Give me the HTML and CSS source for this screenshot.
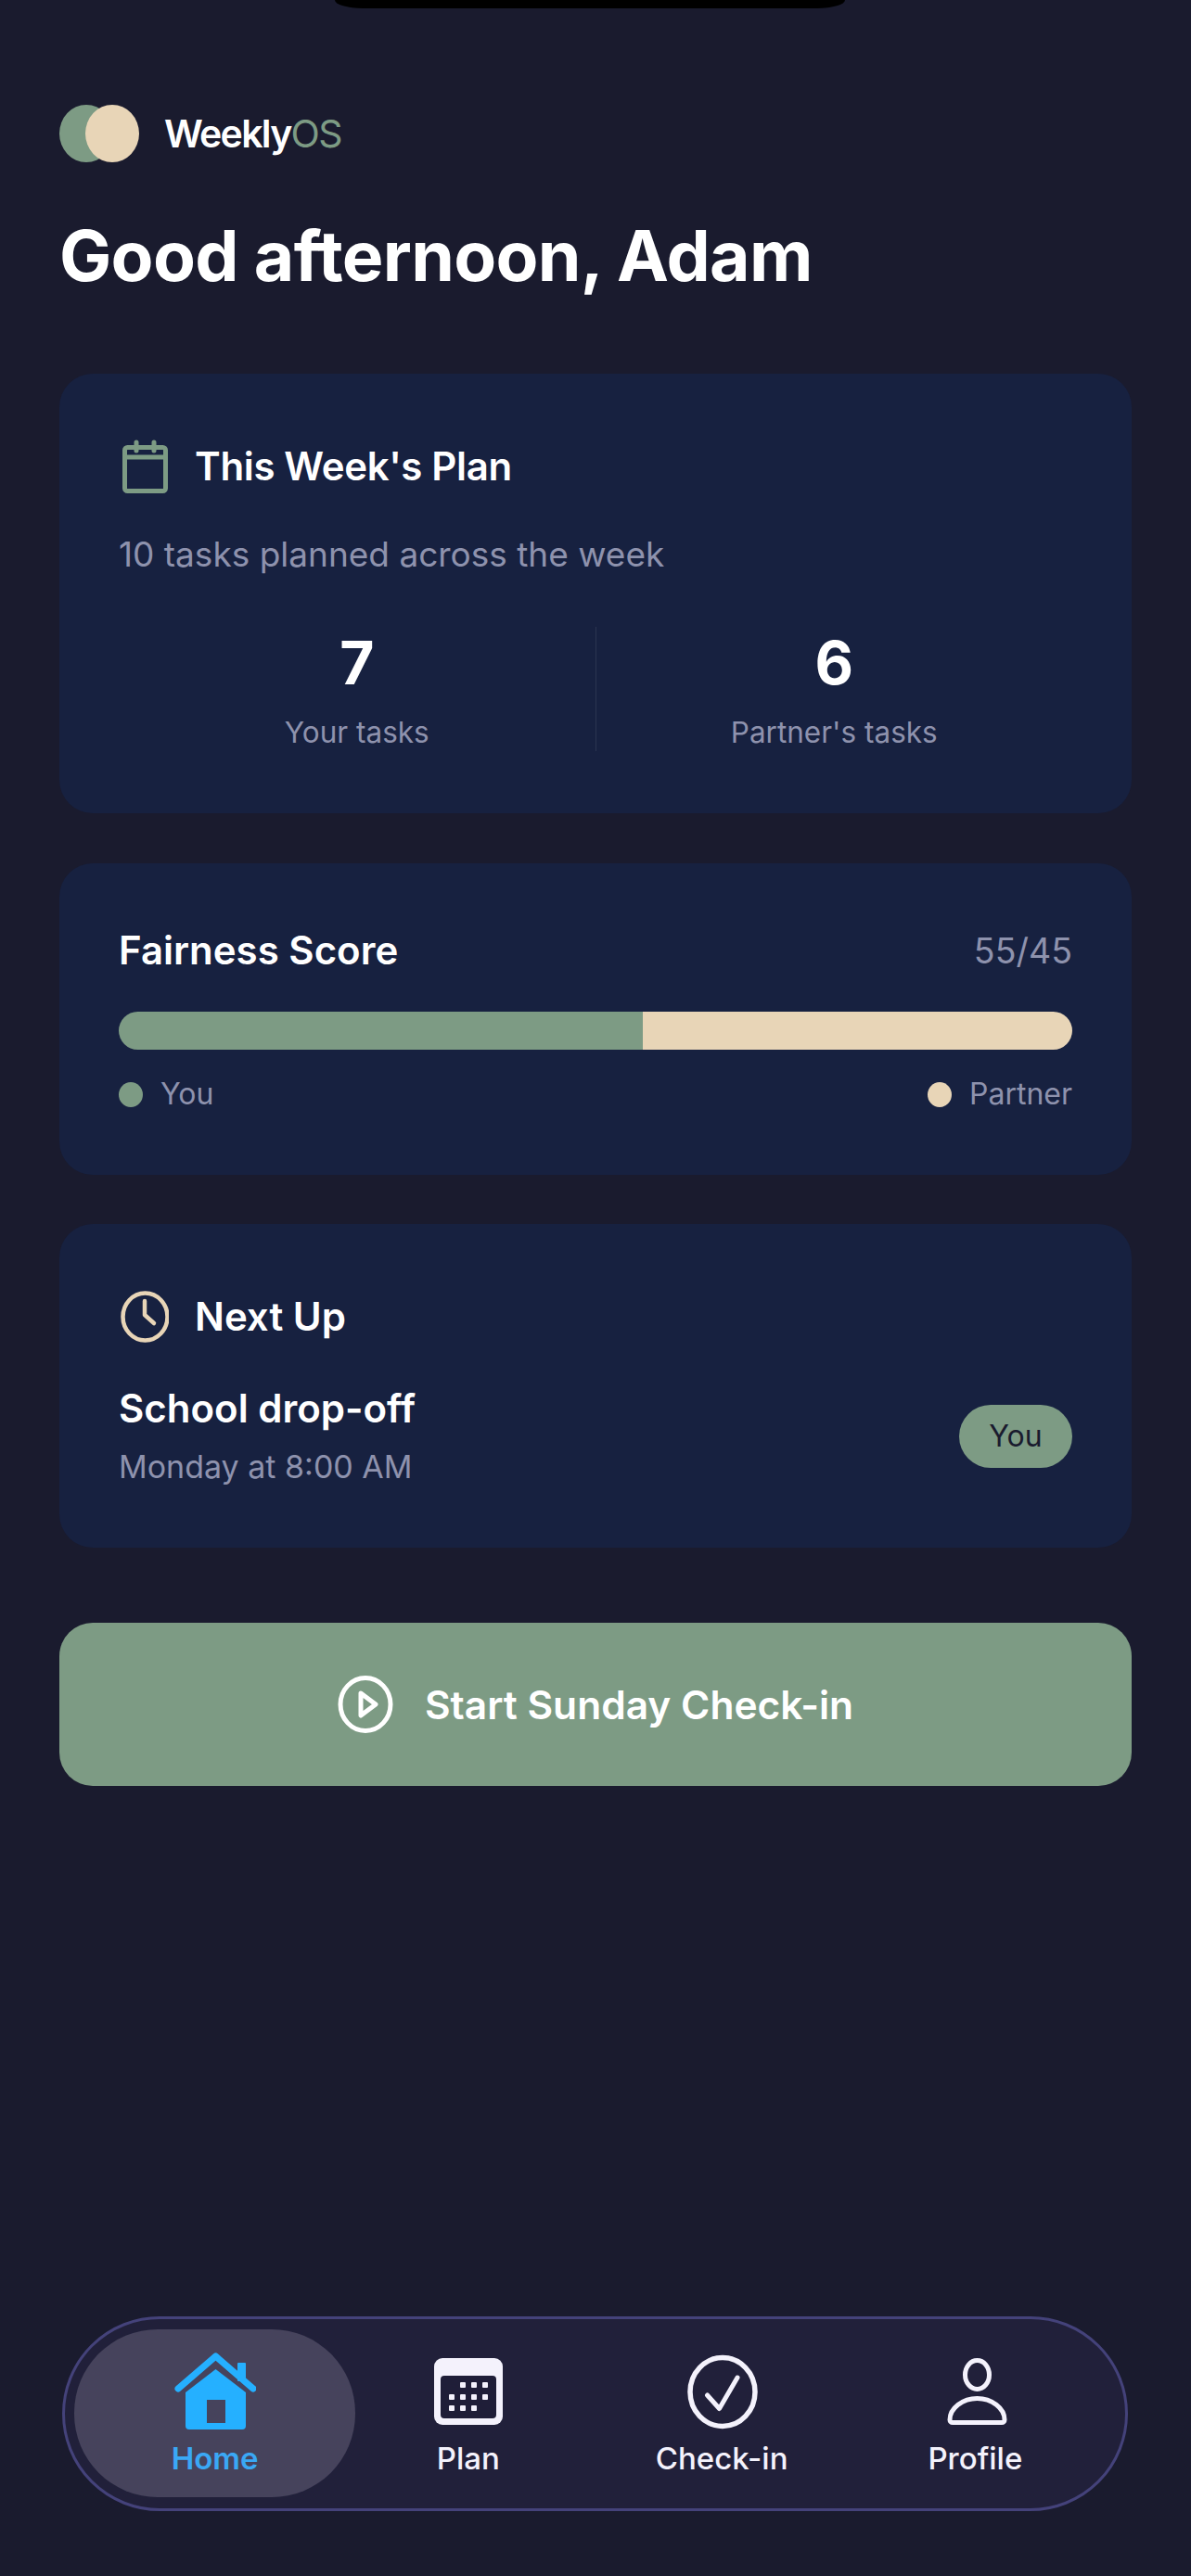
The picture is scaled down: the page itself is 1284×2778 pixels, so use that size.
FILE: index.html
```html
<!DOCTYPE html>
<html lang="en">
<head>
<meta charset="utf-8">
<title>WeeklyOS</title>
<link rel="stylesheet" href="styles.css">
</head>
<body>
<div class="notch"></div>
<main class="content">
  <header class="brand">
    <div class="logo"><span class="logo-a"></span><span class="logo-b"></span></div>
    <div class="wordmark">Weekly<span class="wordmark-os">OS</span></div>
  </header>
  <h1 class="greeting">Good afternoon, Adam</h1>

  <section class="card card-plan">
    <div class="card-head">
      <svg class="head-icon" viewBox="0 0 54 58" fill="none" stroke="#7d9b84" stroke-width="5" stroke-linecap="round" stroke-linejoin="round"><rect x="6.500" y="8.500" width="44" height="47" rx="3"/><path d="M6.500 19h44M19 3v9M38 3v9"/></svg>
      <h2 class="card-title card-title-tight">This Week's Plan</h2>
    </div>
    <p class="plan-sub">10 tasks planned across the week</p>
    <div class="stats">
      <div class="stat"><div class="stat-num">7</div><div class="stat-label">Your tasks</div></div>
      <div class="stat-divider"></div>
      <div class="stat"><div class="stat-num">6</div><div class="stat-label">Partner's tasks</div></div>
    </div>
  </section>

  <section class="card card-fair">
    <div class="fair-head">
      <h2 class="card-title">Fairness Score</h2>
      <span class="fair-value">55/45</span>
    </div>
    <div class="bar"><div class="bar-you"></div><div class="bar-partner"></div></div>
    <div class="legend">
      <div class="legend-item"><span class="dot dot-you"></span>You</div>
      <div class="legend-item"><span class="dot dot-partner"></span>Partner</div>
    </div>
  </section>

  <section class="card card-next">
    <div class="card-head">
      <svg class="head-icon" viewBox="0 0 54 58" fill="none" stroke="#e8d5b7" stroke-width="4.500" stroke-linecap="round" stroke-linejoin="round"><ellipse cx="28.500" cy="29" rx="24" ry="25.500"/><path d="M28 12v15l10 9"/></svg>
      <h2 class="card-title">Next Up</h2>
    </div>
    <div class="next-row">
      <div>
        <div class="next-name">School drop-off</div>
        <div class="next-time">Monday at 8:00 AM</div>
      </div>
      <span class="badge">You</span>
    </div>
  </section>

  <button class="cta">
    <svg class="cta-icon" viewBox="0 0 60 62" fill="none" stroke="#fff" stroke-width="5" stroke-linecap="round" stroke-linejoin="round"><ellipse cx="30" cy="31" rx="27" ry="28.500"/><path d="M25 19 41 31 25 43Z"/></svg>
    <span>Start Sunday Check-in</span>
  </button>
</main>

<nav class="tabbar">
  <a class="tab tab-active">
    <svg class="tab-icon" viewBox="0 0 88 88" fill="#25b0ff"><path d="M12 43 44.500 18 77 43V79a4 4 0 0 1-4 4H16a4 4 0 0 1-4-4Z"/><rect x="68" y="11" width="9" height="20" rx="1"/><path d="M4 39 44.500 4 85 39" fill="none" stroke="#25b0ff" stroke-width="7" stroke-linecap="round" stroke-linejoin="round"/><rect x="35" y="51" width="20" height="25" fill="#46435c"/></svg>
    <span class="tab-label">Home</span>
  </a>
  <a class="tab">
    <svg class="tab-icon" viewBox="0 0 88 88"><rect x="7" y="6" width="74" height="72" rx="9" fill="#f4f2fc"/><rect x="14" y="25" width="60" height="46" rx="4" fill="#1f1e38"/><g fill="#f4f2fc"><rect x="35" y="32" width="6" height="6" rx="1"/><rect x="47" y="32" width="6" height="6" rx="1"/><rect x="59" y="32" width="6" height="6" rx="1"/><rect x="23" y="45" width="6" height="6" rx="1"/><rect x="35" y="45" width="6" height="6" rx="1"/><rect x="47" y="45" width="6" height="6" rx="1"/><rect x="59" y="45" width="6" height="6" rx="1"/><rect x="23" y="57" width="6" height="6" rx="1"/><rect x="35" y="57" width="6" height="6" rx="1"/><rect x="47" y="57" width="6" height="6" rx="1"/></g></svg>
    <span class="tab-label">Plan</span>
  </a>
  <a class="tab">
    <svg class="tab-icon" viewBox="0 0 88 88" fill="none" stroke="#f4f2fc" stroke-linecap="round" stroke-linejoin="round"><ellipse cx="45" cy="42.500" rx="35" ry="37" stroke-width="5.500"/><path d="M28.500 46 41.500 60.500 61 27" stroke-width="5"/></svg>
    <span class="tab-label">Check-in</span>
  </a>
  <a class="tab">
    <svg class="tab-icon" viewBox="0 0 88 88" fill="none" stroke="#f4f2fc" stroke-width="5" stroke-linecap="round" stroke-linejoin="round"><ellipse cx="46.500" cy="24" rx="13" ry="15.500"/><path d="M20 75.500H73a3 3 0 0 0 3-3C76 60 62 49.500 46.500 49.500S17 60 17 72.500a3 3 0 0 0 3 3Z"/></svg>
    <span class="tab-label">Profile</span>
  </a>
</nav>
</body>
</html>
```

FILE: styles.css
```css
* { box-sizing: border-box; }
html, body { margin: 0; padding: 0; }
body {
  width: 1284px;
  height: 2778px;
  background: #1a1b2e;
  font-family: Inter, "Noto Sans", sans-serif;
  color: #fff;
  display: flex;
  flex-direction: column;
  overflow: hidden;
}
.notch {
  flex: none;
  width: 550px;
  height: 9px;
  margin: 0 0 0 361px;
  background: #000;
  border-radius: 0 0 30px 30px / 0 0 9px 9px;
}
.content {
  flex: 1;
  display: flex;
  flex-direction: column;
  padding: 104px 64px 0;
}
.brand { display: flex; align-items: center; gap: 27px; height: 62px; }
.logo { display: flex; width: 86px; height: 62px; }
.logo-a, .logo-b { width: 58px; height: 62px; border-radius: 50%; flex: none; }
.logo-a { background: #7d9b84; }
.logo-b { background: #e8d5b7; margin-left: -30px; }
.wordmark { font-size: 41px; font-weight: 600; letter-spacing: -1.700px; }
.wordmark-os { color: #7d9b84; font-weight: 400; }
.greeting {
  margin: 57px 0 0;
  font-size: 75px;
  line-height: 88px;
  font-weight: 700;
  letter-spacing: -0.700px;
}
.card {
  background: #172140;
  border-radius: 36px;
  padding: 0 64px;
}
.card-plan { height: 474px; margin-top: 83px; padding-top: 72px; }
.card-fair { height: 336px; margin-top: 54px; padding-top: 66px; }
.card-next { height: 349px; margin-top: 53px; padding-top: 72px; }
.card-head { display: flex; align-items: center; gap: 28px; height: 56px; }
.head-icon { width: 54px; height: 58px; flex: none; }
.card-title { margin: 0; font-size: 42px; line-height: 56px; font-weight: 600; }
.card-title-tight { letter-spacing: -0.350px; }
.plan-sub { margin: 42px 0 0; font-size: 37px; line-height: 50px; color: #8e92ad; }
.stats { display: flex; align-items: stretch; margin-top: 53px; height: 134px; }
.stat { flex: 1; text-align: center; }
.stat-divider { width: 1px; background: #2b3450; }
.stat-num { font-size: 64px; line-height: 78px; font-weight: 700; }
.stat-label { font-size: 31.500px; line-height: 44px; color: #8e92ad; margin-top: 14px; }
.fair-head { display: flex; justify-content: space-between; align-items: center; height: 56px; }
.fair-value { font-size: 37.500px; color: #8e92ad; }
.bar { display: flex; height: 41px; margin-top: 38px; border-radius: 21px; overflow: hidden; }
.bar-you { width: 55%; background: #7d9b84; }
.bar-partner { flex: 1; background: #e8d5b7; }
.legend { display: flex; justify-content: space-between; margin-top: 28px; }
.legend-item { display: flex; align-items: center; gap: 19px; font-size: 32px; line-height: 40px; color: #8e92ad; }
.dot { width: 26px; height: 27px; border-radius: 50%; }
.dot-you { background: #7d9b84; }
.dot-partner { background: #e8d5b7; }
.next-row { display: flex; justify-content: space-between; align-items: center; margin-top: 43px; }
.next-name { font-size: 42px; line-height: 56px; font-weight: 600; }
.next-time { font-size: 34px; line-height: 48px; color: #8e92ad; margin-top: 11px; }
.badge {
  background: #7d9b84;
  color: #1a1b2e;
  font-size: 32px;
  font-weight: 400;
  line-height: 68px;
  width: 122px;
  text-align: center;
  border-radius: 34px;
}
.cta {
  height: 176px;
  margin-top: 81px;
  border: 0;
  border-radius: 36px;
  background: #7d9b84;
  color: #fff;
  font-family: inherit;
  font-size: 42.500px;
  font-weight: 600;
  display: flex;
  align-items: center;
  justify-content: center;
  gap: 34px;
}
.cta-icon { width: 60px; height: 62px; flex: none; }
.tabbar {
  flex: none;
  display: grid;
  grid-template-columns: repeat(4, 1fr);
  width: 1149px;
  height: 210px;
  margin: 0 0 70px 67px;
  padding: 0 25px;
  background: #21203a;
  border: 3px solid #44427a;
  border-radius: 105px;
}
.tab {
  position: relative;
  display: flex;
  flex-direction: column;
  align-items: center;
  color: #f4f2fc;
  padding-top: 36px;
}
.tab-active::before {
  content: "";
  position: absolute;
  left: -15px;
  right: -15px;
  top: 11px;
  bottom: 12px;
  background: #46435c;
  border-radius: 90px;
}
.tab-icon { position: relative; width: 88px; height: 88px; }
.tab-label { position: relative; font-size: 33px; line-height: 40px; font-weight: 500; margin-top: 6px; }
.tab-active .tab-label { color: #3aa8f5; font-weight: 600; }
```
